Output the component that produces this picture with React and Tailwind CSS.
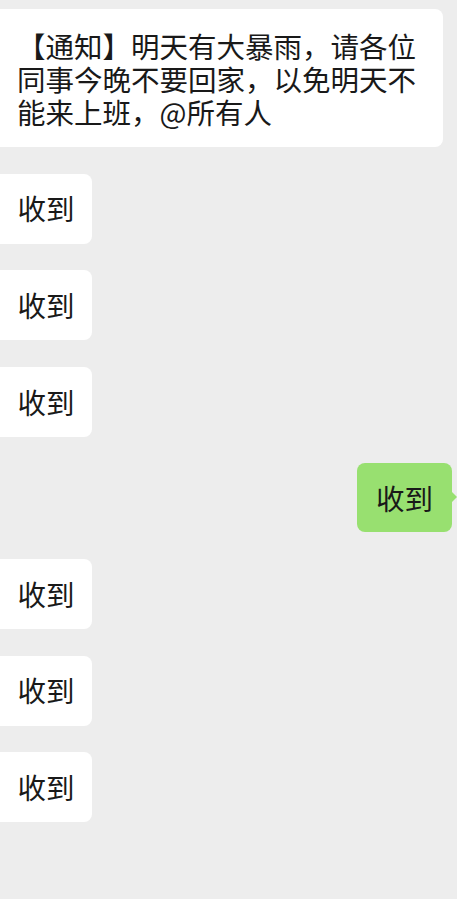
export default function App() {
  const font = { fontFamily: '"Noto Sans CJK SC", "Noto Sans", sans-serif' };
  const Left = () => (
    <div className="flex">
      <div className="h-[70px] w-[92px] bg-white rounded-r-[8px] flex items-center justify-center text-[28.5px] leading-none text-[#191919]">
        收到
      </div>
    </div>
  );
  return (
    <div
      className="w-[457px] h-[899px] bg-[#ededed] overflow-hidden flex flex-col gap-[26.6px] pt-[9px]"
      style={font}
    >
      <div className="w-[443px] bg-white rounded-r-[8px] pl-[17px] pr-[14px] pt-[20px] pb-[19px] text-[28.5px] leading-[33px] text-[#191919]">
        【通知】明天有大暴雨，请各位同事今晚不要回家，以免明天不能来上班，@所有人
      </div>
      <Left />
      <Left />
      <Left />
      <div className="flex justify-end pr-[5px]">
        <div className="relative h-[69px] w-[95px] bg-[#98e070] rounded-[8px] flex items-center justify-center text-[28.5px] leading-none text-[#191919]">
          收到
          <div className="absolute right-[-5px] top-[28px] w-0 h-0 border-y-[6px] border-y-transparent border-l-[6px] border-l-[#98e070]" />
        </div>
      </div>
      <Left />
      <Left />
      <Left />
    </div>
  );
}
